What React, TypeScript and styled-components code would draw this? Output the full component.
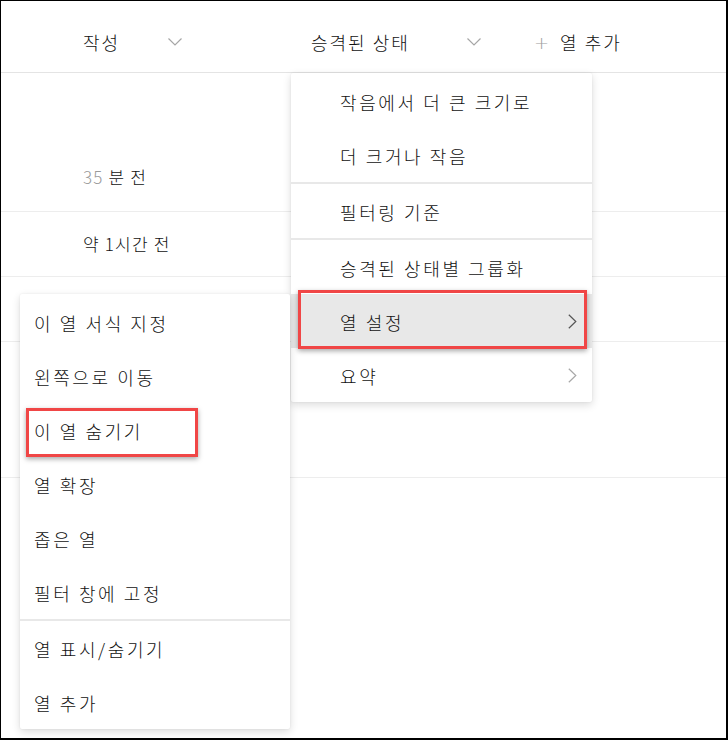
import React from "react";
import styled, { createGlobalStyle } from "styled-components";

const GlobalStyle = createGlobalStyle`
  html, body {
    margin: 0;
    padding: 0;
    background: #ffffff;
  }
  body {
    font-family: "Noto Sans CJK KR", "Noto Sans", sans-serif;
    color: #111111;
  }
`;

type MenuItemType = {
  label: string;
  submenu?: boolean;
  active?: boolean;
  dividerBefore?: boolean;
  dimChevron?: boolean;
  highlight?: { left: number; right: number; top: number; bottom: number };
};

const sortMenu: Array<MenuItemType> = [
  { label: "작음에서 더 큰 크기로" },
  { label: "더 크거나 작음" },
  { label: "필터링 기준", dividerBefore: true },
  { label: "승격된 상태별 그룹화", dividerBefore: true },
  {
    label: "열 설정",
    submenu: true,
    active: true,
    highlight: { left: 7, right: 5, top: -4, bottom: -1 },
  },
  { label: "요약", submenu: true, dimChevron: true },
];

const settingsMenu: Array<MenuItemType> = [
  { label: "이 열 서식 지정" },
  { label: "왼쪽으로 이동" },
  {
    label: "이 열 숨기기",
    highlight: { left: 6, right: 92, top: 5, bottom: 0 },
  },
  { label: "열 확장" },
  { label: "좁은 열" },
  { label: "필터 창에 고정" },
  { label: "열 표시/숨기기", dividerBefore: true },
  { label: "열 추가" },
];

const ChevronDown = () => (
  <svg width="14" height="8" viewBox="0 0 14 8" fill="none">
    <polyline points="0.5,0.5 7,7 13.5,0.5" stroke="#a6a6a6" strokeWidth="1.2" />
  </svg>
);

const ChevronRight = ({ dim }: { dim?: boolean }) => (
  <svg width="9" height="15" viewBox="0 0 9 15" fill="none">
    <polyline
      points="0.8,0.8 7.8,7.5 0.8,14.2"
      stroke={dim ? "#a8a8a8" : "#555555"}
      strokeWidth="1.2"
    />
  </svg>
);

const Menu = (props: {
  items: Array<MenuItemType>;
  left: number;
  top: number;
  width: number;
  indent: number;
}) => {
  return (
    <MenuPanel $left={props.left} $top={props.top} $width={props.width}>
      {props.items.map((item, index) => (
        <React.Fragment key={index}>
          {item.dividerBefore && <MenuDivider />}
          <MenuRow $active={item.active} $indent={props.indent}>
            <MenuText>{item.label}</MenuText>
            {item.submenu && <ChevronRight dim={item.dimChevron} />}
            {item.highlight && (
              <Highlight
                $left={item.highlight.left}
                $right={item.highlight.right}
                $top={item.highlight.top}
                $bottom={item.highlight.bottom}
              />
            )}
          </MenuRow>
        </React.Fragment>
      ))}
    </MenuPanel>
  );
};

export default function App() {
  return (
    <>
      <GlobalStyle />
      <Frame>
        <HeaderRow>
          <HeaderCell $width={228}>
            <HeaderLabel $width={85}>작성</HeaderLabel>
            <ChevronDown />
          </HeaderCell>
          <HeaderCell $width={223}>
            <HeaderLabel $width={156}>승격된 상태</HeaderLabel>
            <ChevronDown />
          </HeaderCell>
          <AddColumn>
            <Plus>+</Plus>
            <span>열 추가</span>
          </AddColumn>
        </HeaderRow>
        <DataRow $height={139} $pad={22} $align="flex-end">
          <CellText>
            <Muted>35</Muted> 분 전
          </CellText>
        </DataRow>
        <DataRow $height={65} $pad={0} $align="center">
          <CellText>약 1시간 전</CellText>
        </DataRow>
        <DataRow $height={65} $pad={0} $align="center" />
        <DataRow $height={136} $pad={0} $align="center" />

        <Menu items={sortMenu} left={290} top={72} width={301} indent={49} />
        <Menu items={settingsMenu} left={19} top={293} width={270} indent={14} />
      </Frame>
    </>
  );
}

const Frame = styled.div`
  position: relative;
  box-sizing: border-box;
  width: 728px;
  height: 740px;
  border-style: solid;
  border-color: #000000;
  border-width: 1px 2px 2px 1px;
  background: #ffffff;
  overflow: hidden;
`;

const HeaderRow = styled.div`
  box-sizing: border-box;
  display: flex;
  align-items: center;
  height: 72px;
  padding-left: 82px;
  border-bottom: 1px solid #e4e4e4;
  font-size: 18px;
  font-weight: 300;
  letter-spacing: 2px;
`;

const HeaderCell = styled.div<{ $width: number }>`
  display: flex;
  align-items: center;
  width: ${(p) => p.$width}px;
  margin-top: 11px;
`;

const HeaderLabel = styled.span<{ $width: number }>`
  width: ${(p) => p.$width}px;
`;

const AddColumn = styled.div`
  display: flex;
  align-items: center;
  gap: 9px;
  margin-top: 11px;
`;

const Plus = styled.span`
  color: #a0a0a0;
  font-family: "DejaVu Sans", sans-serif;
  font-weight: 300;
  font-size: 18px;
`;

const DataRow = styled.div<{ $height: number; $pad: number; $align: string }>`
  box-sizing: border-box;
  display: flex;
  align-items: ${(p) => p.$align};
  height: ${(p) => p.$height}px;
  padding: 0 0 ${(p) => p.$pad}px 82px;
  border-bottom: 1px solid #ededed;
`;

const CellText = styled.span`
  font-size: 17px;
  font-weight: 300;
  letter-spacing: 1.2px;
  line-height: 24px;
`;

const Muted = styled.span`
  color: #9a9a9a;
`;

const MenuPanel = styled.div<{ $left: number; $top: number; $width: number }>`
  position: absolute;
  left: ${(p) => p.$left}px;
  top: ${(p) => p.$top}px;
  width: ${(p) => p.$width}px;
  padding-top: 1px;
  background: #ffffff;
  border-radius: 2px;
  box-shadow: 0 3px 9px rgba(0, 0, 0, 0.14), 0 0 2px rgba(0, 0, 0, 0.08);
`;

const MenuRow = styled.div<{ $active?: boolean; $indent: number }>`
  position: relative;
  box-sizing: border-box;
  display: flex;
  align-items: center;
  justify-content: space-between;
  height: 54px;
  padding: 1px 15px 0 ${(p) => p.$indent}px;
  background: ${(p) => (p.$active ? "#e8e8e8" : "transparent")};
`;

const MenuText = styled.span`
  font-size: 18px;
  font-weight: 300;
  letter-spacing: 2.6px;
  white-space: nowrap;
`;

const MenuDivider = styled.div`
  height: 2px;
  background: #e8e8e8;
`;

const Highlight = styled.div<{
  $left: number;
  $right: number;
  $top: number;
  $bottom: number;
}>`
  position: absolute;
  left: ${(p) => p.$left}px;
  right: ${(p) => p.$right}px;
  top: ${(p) => p.$top}px;
  bottom: ${(p) => p.$bottom}px;
  border: 3px solid #f04646;
  box-shadow: 0 2px 5px rgba(0, 0, 0, 0.35);
  pointer-events: none;
`;
